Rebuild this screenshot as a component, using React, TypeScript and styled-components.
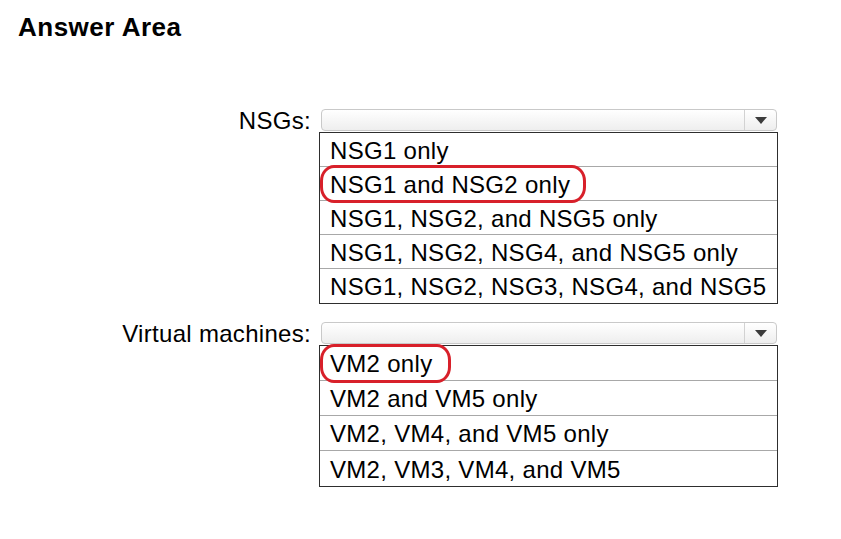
import React from "react";
import styled, { createGlobalStyle } from "styled-components";

const GlobalStyle = createGlobalStyle`
  html, body {
    margin: 0;
    padding: 0;
    background: #ffffff;
  }
  body {
    font-family: "Liberation Sans", Arial, sans-serif;
    color: #000;
  }
`;

type Question = {
  label: string;
  options: string[];
  answer: number;
  markWidth: number;
  rowHeight: number;
};

const questions: Question[] = [
  {
    label: "NSGs:",
    options: [
      "NSG1 only",
      "NSG1 and NSG2 only",
      "NSG1, NSG2, and NSG5 only",
      "NSG1, NSG2, NSG4, and NSG5 only",
      "NSG1, NSG2, NSG3, NSG4, and NSG5",
    ],
    answer: 1,
    markWidth: 266,
    rowHeight: 34,
  },
  {
    label: "Virtual machines:",
    options: [
      "VM2 only",
      "VM2 and VM5 only",
      "VM2, VM4, and VM5 only",
      "VM2, VM3, VM4, and VM5",
    ],
    answer: 0,
    markWidth: 131,
    rowHeight: 35,
  },
];

export default function App() {
  return (
    <Page>
      <GlobalStyle />
      <Title>Answer Area</Title>
      <Form>
        {questions.map((q) => (
          <Field key={q.label}>
            <Label>{q.label}</Label>
            <Control>
              <Select>
                <SelectValue />
                <ArrowButton>
                  <Caret />
                </ArrowButton>
              </Select>
              <OptionList>
                {q.options.map((opt, i) => (
                  <Option key={opt} $height={q.rowHeight}>
                    {opt}
                    {i === q.answer && <Mark $width={q.markWidth} />}
                  </Option>
                ))}
              </OptionList>
            </Control>
          </Field>
        ))}
      </Form>
    </Page>
  );
}

const Page = styled.div`
  width: 841px;
  height: 539px;
  box-sizing: border-box;
  padding-top: 14px;
  background: #fff;
`;

const Title = styled.h1`
  margin: 0 0 0 18px;
  font-size: 26px;
  line-height: 26px;
  font-weight: bold;
  letter-spacing: 0.5px;
  color: #000;
`;

const Form = styled.div`
  display: flex;
  flex-direction: column;
  gap: 18px;
  margin-top: 69px;
`;

const Field = styled.div`
  display: grid;
  grid-template-columns: 311px 459px;
  column-gap: 8px;
  align-items: start;
`;

const Label = styled.div`
  text-align: right;
  font-size: 24px;
  letter-spacing: 0.3px;
  line-height: 22px;
  padding-top: 1px;
  color: #000;
`;

const Control = styled.div`
  display: flex;
  flex-direction: column;
  gap: 1px;
`;

const Select = styled.div`
  display: flex;
  height: 22px;
  margin: 0 1px 0 2px;
  box-sizing: border-box;
  border: 1px solid #c9c9c9;
  border-radius: 4px;
  background: linear-gradient(#ffffff, #eeeeee);
`;

const SelectValue = styled.div`
  flex: 1;
`;

const ArrowButton = styled.div`
  width: 31px;
  display: flex;
  align-items: center;
  justify-content: center;
  border-left: 1px solid #d2d2d2;
`;

const Caret = styled.span`
  width: 0;
  height: 0;
  border-left: 6px solid transparent;
  border-right: 6px solid transparent;
  border-top: 7px solid #3c3c3c;
`;

const OptionList = styled.div`
  border: 1px solid #2e2e2e;
  background: #fff;
`;

const Option = styled.div<{ $height: number }>`
  position: relative;
  box-sizing: border-box;
  height: ${(p) => p.$height}px;
  display: flex;
  align-items: center;
  padding: 2px 0 0 10px;
  font-size: 24px;
  letter-spacing: 0.3px;
  color: #000;
  white-space: nowrap;
  border-bottom: 1px solid #a8a8a8;

  &:last-child {
    border-bottom: none;
  }
`;

const Mark = styled.span<{ $width: number }>`
  position: absolute;
  left: 0;
  top: -2px;
  bottom: -3px;
  width: ${(p) => p.$width}px;
  border: 3px solid #d8202a;
  border-radius: 14px / 16px;
  box-sizing: border-box;
  pointer-events: none;
`;
